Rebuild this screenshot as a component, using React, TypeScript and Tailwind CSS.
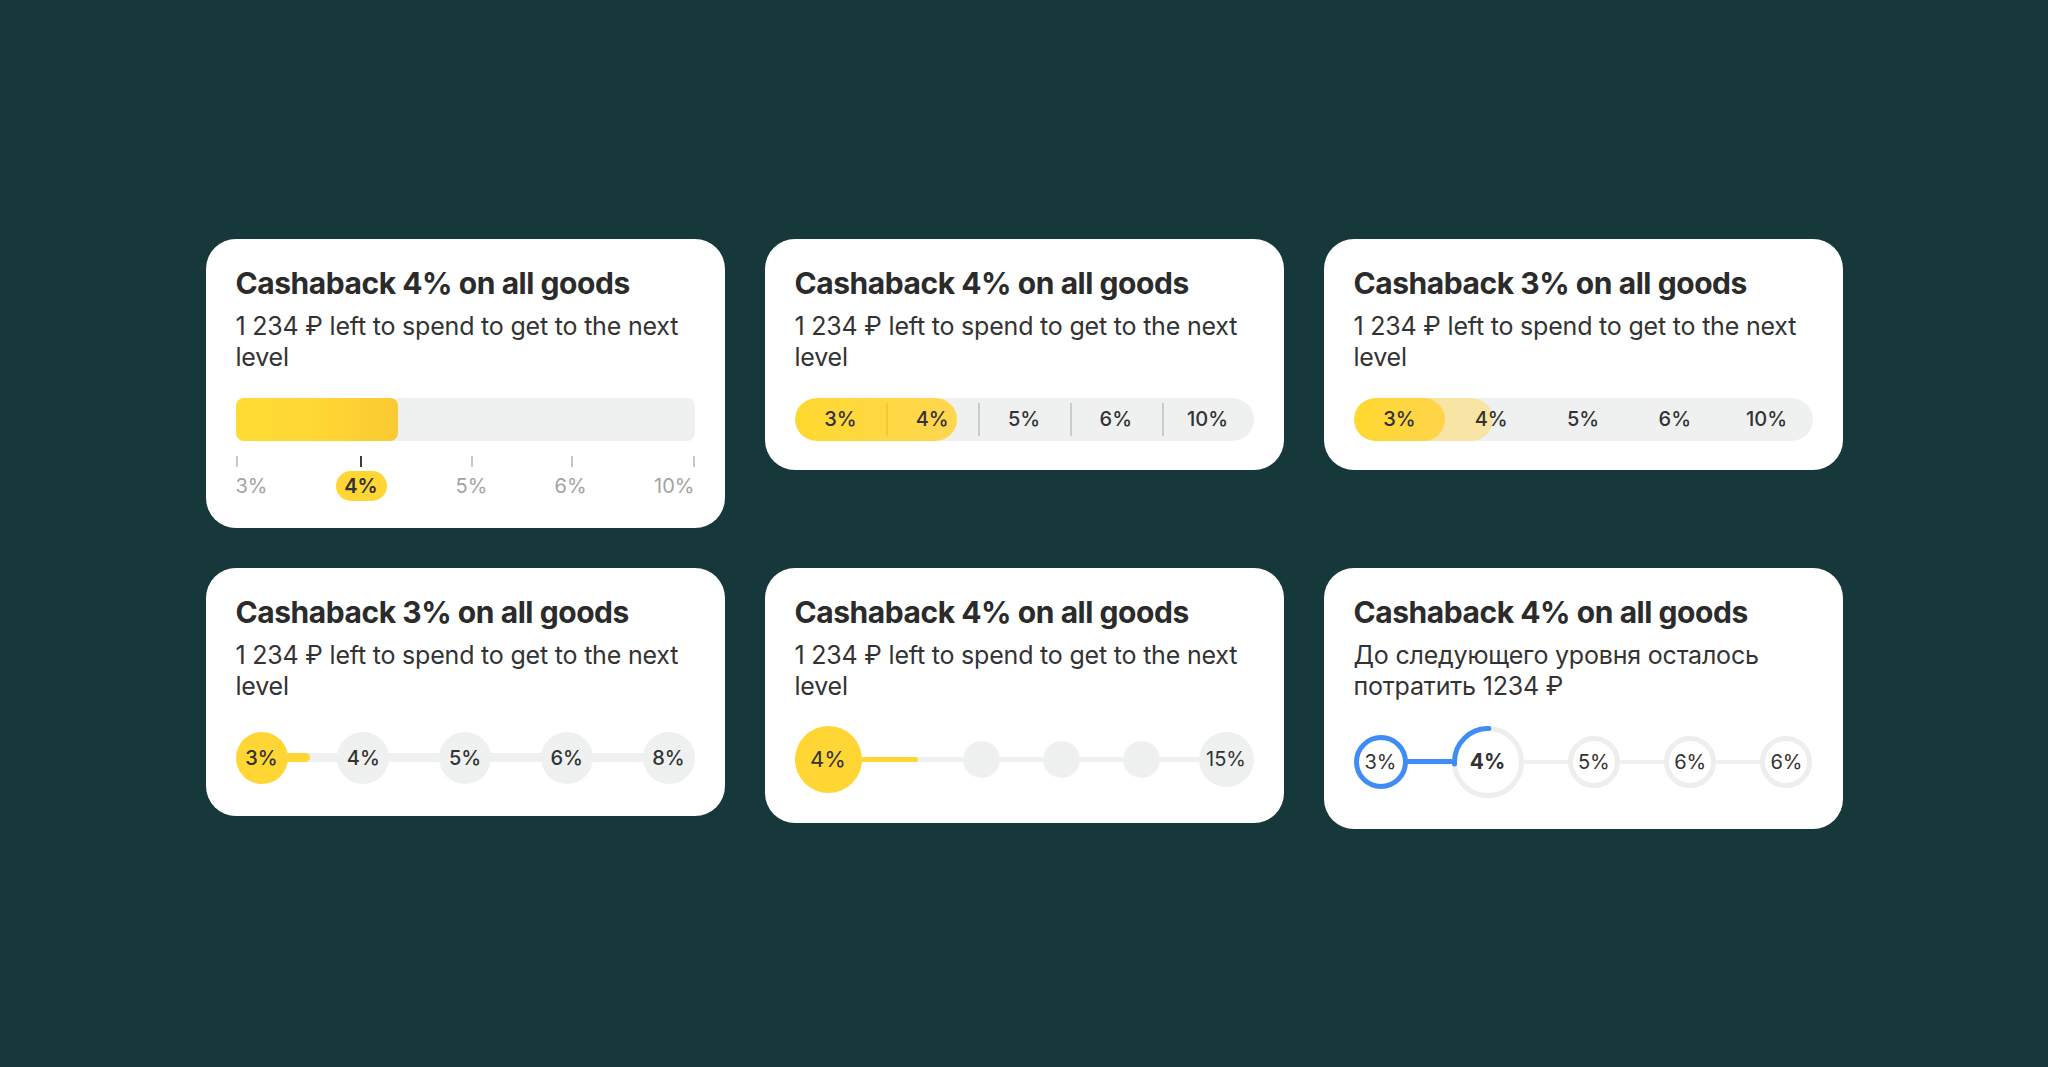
import React from "react";

const YELLOW = "bg-[#ffd633]";

function Card({
  title,
  subtitle,
  children,
  className = "",
}: {
  title: string;
  subtitle: React.ReactNode;
  children: React.ReactNode;
  className?: string;
}) {
  return (
    <div className={`rounded-[30px] bg-white px-[30px] pt-[26px] ${className}`}>
      <h3 className="text-[30px] leading-[36px] font-bold tracking-[-0.45px] text-[#2b2b2b]">{title}</h3>
      <p className="mt-[10px] text-[25px] leading-[31px] tracking-[-0.2px] text-[#333]">{subtitle}</p>
      {children}
    </div>
  );
}

const sub = "1 234 ₽ left to spend to get to the next level";

// card 1 — plain bar with ticks under it
function TickBar() {
  const ticks = [
    { cls: "left-0", dark: false },
    { cls: "left-[124px]", dark: true },
    { cls: "left-[235px]", dark: false },
    { cls: "left-[335px]", dark: false },
    { cls: "right-0", dark: false },
  ];
  return (
    <div className="pb-[27px]">
      <div className="mt-[25px] h-[43px] rounded-[8px] bg-[#eff1f0]">
        <div className="h-full w-[162px] rounded-[8px] bg-linear-to-r from-[#ffdc33] via-[#ffd733] to-[#fbc933]" />
      </div>
      <div className="relative mt-[15px] h-[11px]">
        {ticks.map((t, i) => (
          <span
            key={i}
            className={`absolute top-0 h-full w-[2px] ${t.cls} ${t.dark ? "bg-[#3a3a3a]" : "bg-[#c8c8c8]"}`}
          />
        ))}
      </div>
      <div className="relative mt-[4px] h-[30px] text-[20px] leading-[30px] text-[#a3a3a3]">
        <span className="absolute left-0">3%</span>
        <span className={`absolute left-[100px] flex h-[30px] w-[51px] items-center justify-center rounded-full ${YELLOW} font-semibold text-[#333]`}>
          4%
        </span>
        <span className="absolute left-[236px] -translate-x-1/2">5%</span>
        <span className="absolute left-[335px] -translate-x-1/2">6%</span>
        <span className="absolute right-0">10%</span>
      </div>
    </div>
  );
}

const levels = ["3%", "4%", "5%", "6%", "10%"];

// card 2 — segmented pill with dividers
function SegmentBar() {
  return (
    <div className="pb-[29px]">
      <div className="relative mt-[25px] h-[43px] overflow-hidden rounded-full bg-[#eff1f0]">
        <div className="absolute inset-y-0 left-0 w-[162px] rounded-full bg-linear-to-r from-[#ffd92e] to-[#ffd64f]" />
        <div className="relative grid h-full grid-cols-5">
          {levels.map((l, i) => (
            <div key={l} className="relative flex items-center justify-center text-[20px] font-medium text-[#333]">
              {i > 0 && (
                <span
                  className={`absolute left-0 top-[5px] bottom-[5px] w-[2px] ${i === 1 ? "bg-[#f0c93a]" : "bg-[#cacccb]"}`}
                />
              )}
              {l}
            </div>
          ))}
        </div>
      </div>
    </div>
  );
}

// card 3 — pill without dividers, next level shown pale
function SoftBar() {
  return (
    <div className="pb-[29px]">
      <div className="relative mt-[25px] h-[43px] overflow-hidden rounded-full bg-[#eff1f0]">
        <div className="absolute inset-y-0 left-0 w-[139px] rounded-full bg-[#f8e5a6]" />
        <div className="absolute inset-y-0 left-0 w-[91px] rounded-full bg-linear-to-r from-[#ffd92e] to-[#ffd44a]" />
        <div className="relative grid h-full grid-cols-5">
          {levels.map((l) => (
            <div key={l} className="flex items-center justify-center text-[20px] font-medium text-[#333]">
              {l}
            </div>
          ))}
        </div>
      </div>
    </div>
  );
}

// card 4 — equal dots on a thick track
function DotTrack() {
  const dots = ["3%", "4%", "5%", "6%", "8%"];
  return (
    <div className="mt-[30px] flex items-center pb-[32px]">
      {dots.map((d, i) => (
        <React.Fragment key={d}>
          {i > 0 && (
            <div className="relative -mx-[2px] h-[9px] flex-1 bg-[#eff1f0]">
              {i === 1 && <div className={`h-full w-[24px] rounded-r-full ${YELLOW}`} />}
            </div>
          )}
          <div
            className={`relative flex h-[52px] w-[52px] shrink-0 items-center justify-center rounded-full text-[20px] font-medium text-[#333] ${
              i === 0 ? YELLOW : "bg-[#eff1f0]"
            }`}
          >
            {d}
          </div>
        </React.Fragment>
      ))}
    </div>
  );
}

// card 5 — big current dot, small empty steps, goal at the end
function StepTrack() {
  const line = "h-[5px] bg-[#eff1f0]";
  const small = "h-[37px] w-[37px] shrink-0 rounded-full bg-[#eff1f0]";
  return (
    <div className="mt-[24px] flex h-[67px] items-center">
      <div className={`flex h-[67px] w-[67px] shrink-0 items-center justify-center rounded-full ${YELLOW} text-[22px] text-[#333]`}>
        4%
      </div>
      <div className={`w-[101px] ${line}`}>
        <div className={`h-full w-[56px] rounded-r-full ${YELLOW}`} />
      </div>
      <div className={small} />
      <div className={`w-[43px] ${line}`} />
      <div className={small} />
      <div className={`w-[43px] ${line}`} />
      <div className={small} />
      <div className={`flex-1 ${line}`} />
      <div className="flex h-[55px] w-[55px] shrink-0 items-center justify-center rounded-full bg-[#eff1f0] text-[20px] text-[#333]">
        15%
      </div>
    </div>
  );
}

// card 6 — rings, blue marks the passed part
function Ring({ size, label }: { size: number; label: string }) {
  const r = size / 2 - 2.5;
  return (
    <div className="relative flex h-[52px] w-[52px] shrink-0 items-center justify-center">
      <svg className="absolute inset-0" width={size} height={size}>
        <circle cx={size / 2} cy={size / 2} r={r} fill="white" stroke="#eeeeee" strokeWidth={5} />
      </svg>
      <span className="relative text-[20px] text-[#333]">{label}</span>
    </div>
  );
}

function RingTrack() {
  return (
    <div className="mt-[24px] flex h-[72px] items-center">
      <div className="relative flex h-[54px] w-[54px] shrink-0 items-center justify-center">
        <svg className="absolute inset-0" width={54} height={54}>
          <circle cx={27} cy={27} r={24.5} fill="white" stroke="#3f8cf6" strokeWidth={5} />
        </svg>
        <span className="relative text-[20px] text-[#333]">3%</span>
      </div>
      <div className="-mx-[1px] h-[5px] w-[46px] bg-[#3f8cf6]" />
      <div className="relative flex h-[72px] w-[72px] shrink-0 items-center justify-center">
        <svg className="absolute inset-0" width={72} height={72}>
          <circle cx={36} cy={36} r={33.5} fill="white" stroke="#eeeeee" strokeWidth={5} />
          <path d="M 2.5 38 L 2.5 36 A 33.5 33.5 0 0 1 37 2.5" fill="none" stroke="#3f8cf6" strokeWidth={5} strokeLinecap="round" />
        </svg>
        <span className="relative text-[21px] font-bold text-[#333]">4%</span>
      </div>
      <div className="h-[4px] flex-1 bg-[#eff1f0]" />
      <Ring size={52} label="5%" />
      <div className="h-[4px] flex-1 bg-[#eff1f0]" />
      <Ring size={52} label="6%" />
      <div className="h-[4px] flex-1 bg-[#eff1f0]" />
      <Ring size={52} label="6%" />
    </div>
  );
}

export default function App() {
  return (
    <div className="flex min-h-screen items-center justify-center bg-[#16383a] font-['Inter',sans-serif]">
      <div className="grid grid-cols-[519px_519px_519px] items-start gap-[40px]">
        <Card title="Cashaback 4% on all goods" subtitle={sub}>
          <TickBar />
        </Card>
        <Card title="Cashaback 4% on all goods" subtitle={sub}>
          <SegmentBar />
        </Card>
        <Card title="Cashaback 3% on all goods" subtitle={sub}>
          <SoftBar />
        </Card>
        <Card title="Cashaback 3% on all goods" subtitle={sub}>
          <DotTrack />
        </Card>
        <Card title="Cashaback 4% on all goods" subtitle={sub} className="pb-[30px]">
          <StepTrack />
        </Card>
        <Card
          title="Cashaback 4% on all goods"
          subtitle={
            <>
              До следующего уровня осталось
              <br />
              потратить 1234 ₽
            </>
          }
          className="pb-[31px]"
        >
          <RingTrack />
        </Card>
      </div>
    </div>
  );
}
